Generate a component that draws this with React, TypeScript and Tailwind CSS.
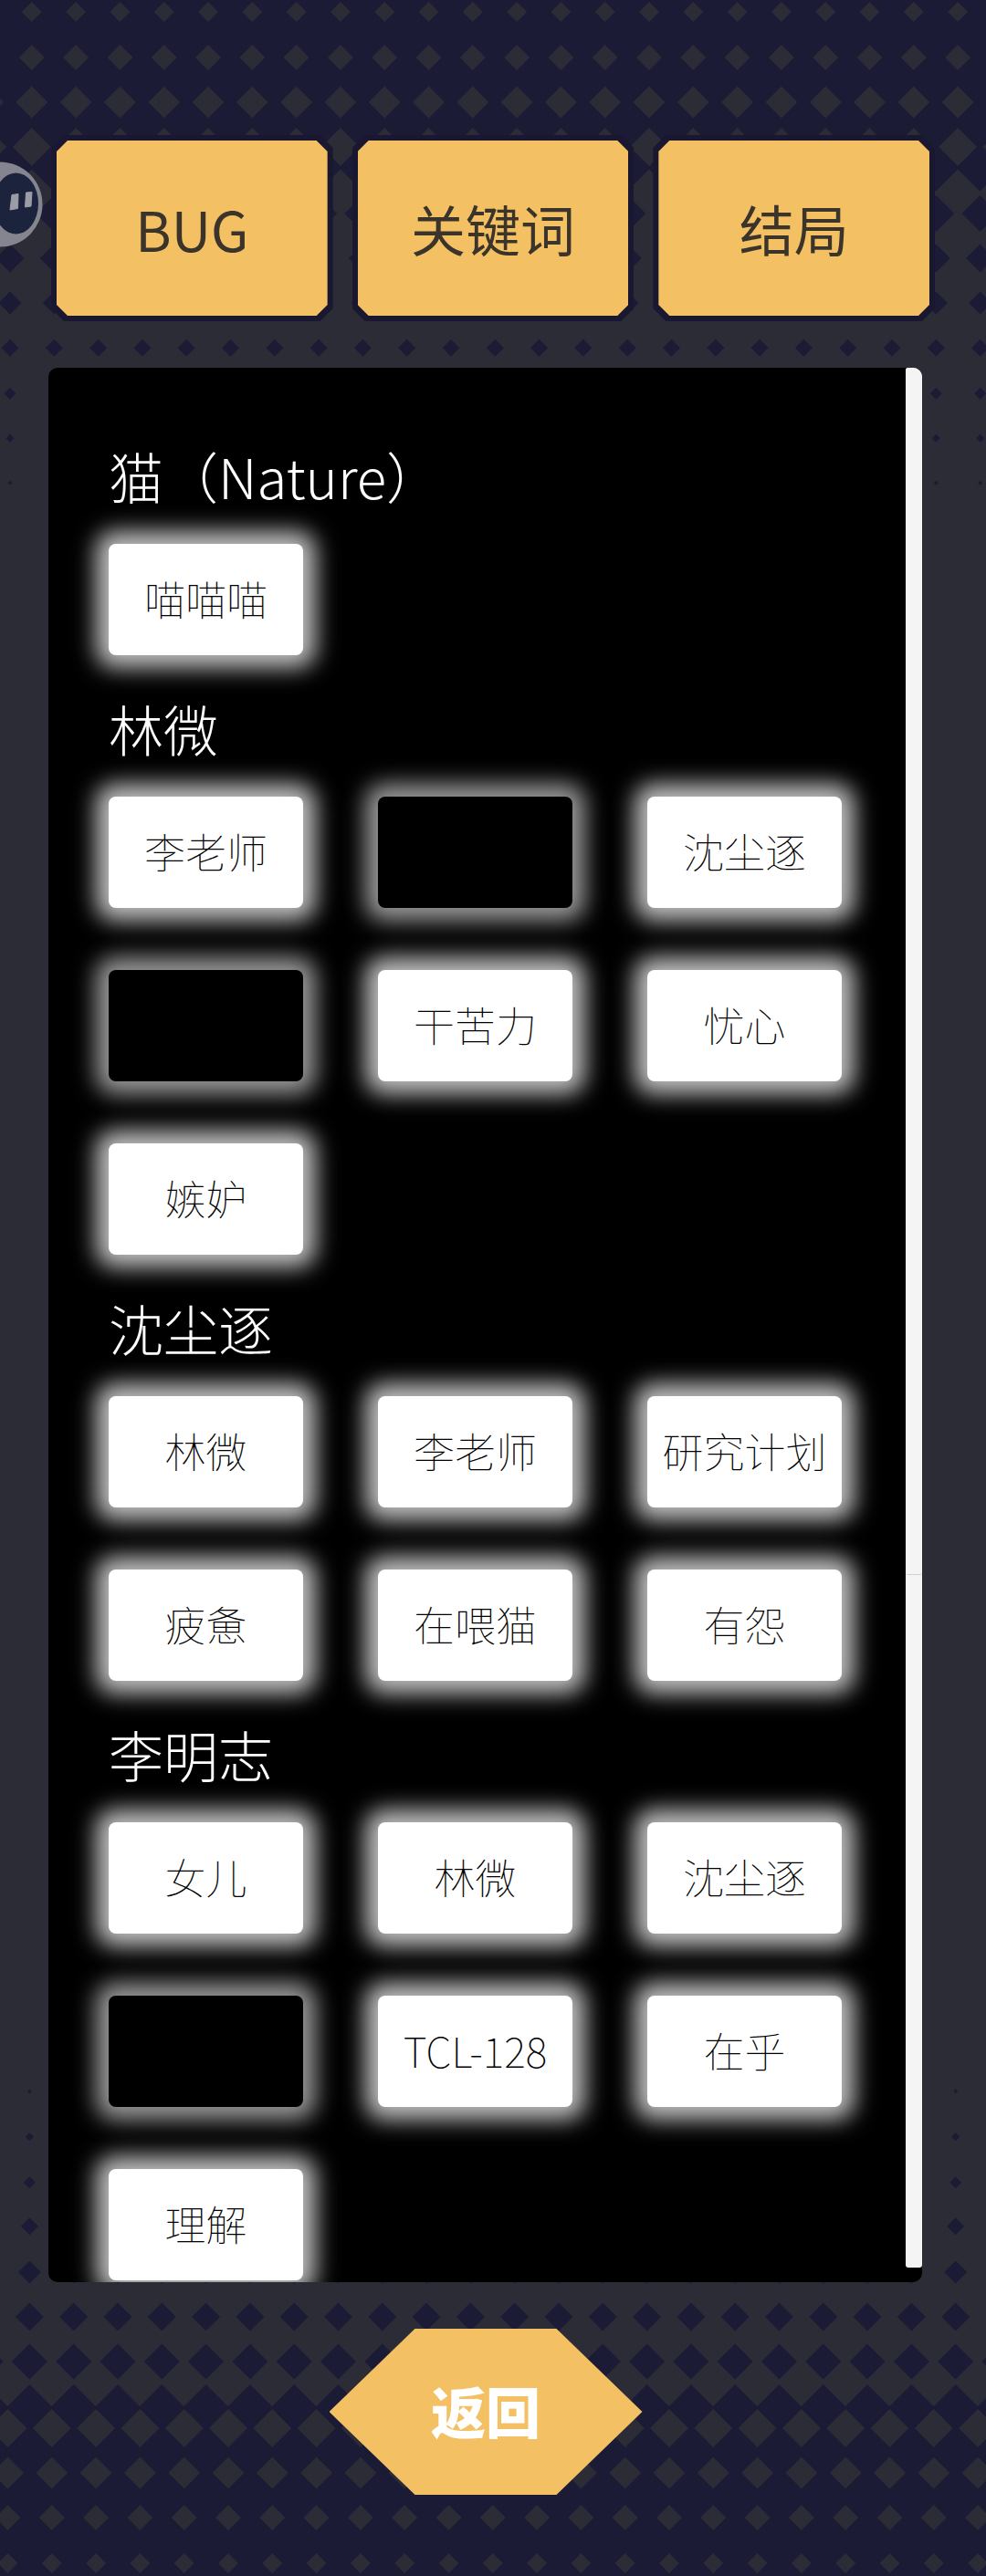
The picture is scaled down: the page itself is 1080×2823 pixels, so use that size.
import React, { useState } from 'react';

type Row = { y: number; r: number };

const NAVY = '#1b1b35';
const SLATE = '#2c2c37';
const STEP = 48.3;
const COLUMNS = 24;

const topLight: Row[] = [
  { y: 13, r: 11 },
  { y: 63, r: 14 },
  { y: 112, r: 17.5 },
  { y: 161, r: 21 },
  { y: 210, r: 24.5 },
];

const topDark: Row[] = [
  { y: 234, r: 20 },
  { y: 283, r: 15.5 },
  { y: 332, r: 12.5 },
  { y: 381, r: 9.5 },
  { y: 431, r: 6.5 },
  { y: 480, r: 4.5 },
  { y: 529, r: 2.5 },
];

const bottomDark: Row[] = [
  { y: 2291, r: 2.5 },
  { y: 2341, r: 4.5 },
  { y: 2391, r: 6.5 },
  { y: 2439, r: 9.5 },
  { y: 2489, r: 12.5 },
  { y: 2538, r: 15.5 },
  { y: 2587, r: 19.5 },
  { y: 2636, r: 24 },
];

const bottomLight: Row[] = [
  { y: 2660, r: 21 },
  { y: 2709, r: 17.5 },
  { y: 2758, r: 14 },
  { y: 2808, r: 11 },
];

const sections = [
  { title: '猫（Nature）', words: ['喵喵喵'] },
  { title: '林微', words: ['李老师', '', '沈尘逐', '', '干苦力', '忧心', '嫉妒'] },
  { title: '沈尘逐', words: ['林微', '李老师', '研究计划', '疲惫', '在喂猫', '有怨'] },
  { title: '李明志', words: ['女儿', '林微', '沈尘逐', '', 'TCL-128', '在乎', '理解'] },
];

const tabs = ['BUG', '关键词', '结局'];

const diamonds = (rows: Row[], startX: number) =>
  rows
    .map(({ y, r }) =>
      Array.from({ length: COLUMNS }, (_, i) => {
        const x = startX + i * STEP;
        return `M${x} ${y - r}L${x + r} ${y}L${x} ${y + r}L${x - r} ${y}Z`;
      }).join('')
    )
    .join('');

const Backdrop: React.FC = () => (
  <svg
    className="absolute inset-0 w-full h-full"
    viewBox="0 0 1080 2823"
    preserveAspectRatio="none"
    aria-hidden="true"
  >
    <rect width="1080" height="2823" fill={SLATE} />
    <rect width="1080" height="210" fill={NAVY} />
    <rect y="2636" width="1080" height="187" fill={NAVY} />
    <path d={diamonds(topLight, -13.5)} fill={SLATE} />
    <path d={diamonds(topDark, 11)} fill={NAVY} />
    <path d={diamonds(bottomDark, -15.9)} fill={NAVY} />
    <path d={diamonds(bottomLight, 8.5)} fill={SLATE} />
  </svg>
);

const FloatingBall: React.FC = () => (
  <svg className="absolute left-0 top-[176px] w-12 h-24" viewBox="0 0 48 96" aria-hidden="true">
    <circle cx="0" cy="48" r="46.5" fill="#84858f" />
    <ellipse cx="17.5" cy="47" rx="24.5" ry="33.5" fill="#1c233d" />
    <path d="M13 37.5L20 36.5L19.5 52.5L11 54Z" fill="#9b9da6" stroke="#9b9da6" strokeLinejoin="round" />
    <path d="M28.5 35L35 34.5L34 50L27.5 51Z" fill="#9b9da6" stroke="#9b9da6" strokeLinejoin="round" />
  </svg>
);

const App: React.FC = () => {
  const [activeTab, setActiveTab] = useState('关键词');

  return (
    <div className="relative min-h-screen overflow-hidden bg-[#2c2c37] font-['Noto_Sans_CJK_SC','Noto_Sans',sans-serif]">
      <Backdrop />
      <FloatingBall />

      <main className="relative flex flex-col pt-[148px] pb-[90px]">
        {/* Tabs */}
        <nav className="grid grid-cols-3 gap-[21px] px-14">
          {tabs.map((tab) => (
            <button
              key={tab}
              type="button"
              aria-pressed={activeTab === tab}
              onClick={() => setActiveTab(tab)}
              className="p-1.5 bg-[#1a1830] cursor-pointer [clip-path:polygon(14px_0,calc(100%-14px)_0,100%_14px,100%_calc(100%-14px),calc(100%-14px)_100%,14px_100%,0_calc(100%-14px),0_14px)]"
            >
              <span className="flex items-center justify-center h-48 bg-[#f4c064] text-[60px] leading-none text-[#3b342a] [clip-path:polygon(12px_0,calc(100%-12px)_0,100%_12px,100%_calc(100%-12px),calc(100%-12px)_100%,12px_100%,0_calc(100%-12px),0_12px)]">
                {tab}
              </span>
            </button>
          ))}
        </nav>

        {/* Keyword list */}
        <div className="flex mt-[51px] ml-[53px] mr-[70px] bg-black rounded-[10px] overflow-hidden">
          <div className="flex-1 pt-[88px] pl-[66px] pr-[70px] pb-0.5">
            {sections.map((section) => (
              <section key={section.title} className="mt-[50px] first:mt-0">
                <h2 className="mb-[45px] text-[60px] leading-[60px] font-light text-white whitespace-nowrap">
                  {section.title}
                </h2>
                <ul className="grid grid-cols-3 gap-x-[82px] gap-y-[68px]">
                  {section.words.map((word, i) => (
                    <li
                      key={i}
                      className={`flex items-center justify-center h-[122px] pb-1 rounded-lg text-[45px] leading-none font-thin text-black whitespace-nowrap ${
                        word
                          ? 'bg-white shadow-[0_0_24px_14px_rgba(255,255,255,0.75)]'
                          : 'bg-black shadow-[0_0_24px_14px_rgba(255,255,255,0.6)]'
                      }`}
                    >
                      {word}
                    </li>
                  ))}
                </ul>
              </section>
            ))}
          </div>
          <div className="w-[18px] mb-4 rounded-[3px] bg-[#f4f4f4]">
            <div className="h-[1323px] rounded-[3px] bg-[#f4f4f4] border-b border-[#cfcfcf]" />
          </div>
        </div>

        {/* Back */}
        <button
          type="button"
          className="self-center mt-[51px] mr-4 w-[343px] h-[182px] pb-1 bg-[#f4c064] text-[60px] leading-none font-black text-white cursor-pointer [clip-path:polygon(0_50%,94px_0,calc(100%-94px)_0,100%_50%,calc(100%-94px)_100%,94px_100%)]"
        >
          返回
        </button>
      </main>
    </div>
  );
};

export default App;
